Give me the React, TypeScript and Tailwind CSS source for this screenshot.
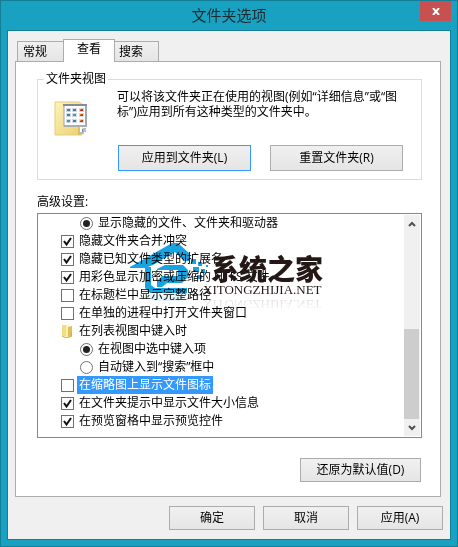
import React, { useState } from 'react';

type Item = {
  id: string;
  label: string;
  kind: 'check' | 'radio' | 'group';
  group?: string;
  on?: boolean;
};

const items: Item[] = [
  { id: 'show-hidden', label: '显示隐藏的文件、文件夹和驱动器', kind: 'radio', group: 'hidden-files', on: true },
  { id: 'merge', label: '隐藏文件夹合并冲突', kind: 'check', on: true },
  { id: 'ext', label: '隐藏已知文件类型的扩展名', kind: 'check', on: true },
  { id: 'ntfs', label: '用彩色显示加密或压缩的 NTFS 文件', kind: 'check', on: true },
  { id: 'path', label: '在标题栏中显示完整路径', kind: 'check' },
  { id: 'process', label: '在单独的进程中打开文件夹窗口', kind: 'check' },
  { id: 'typing', label: '在列表视图中键入时', kind: 'group' },
  { id: 'select', label: '在视图中选中键入项', kind: 'radio', group: 'typing', on: true },
  { id: 'search', label: '自动键入到“搜索”框中', kind: 'radio', group: 'typing' },
  { id: 'thumb', label: '在缩略图上显示文件图标', kind: 'check' },
  { id: 'size', label: '在文件夹提示中显示文件大小信息', kind: 'check', on: true },
  { id: 'preview', label: '在预览窗格中显示预览控件', kind: 'check', on: true },
];

const buttonStyle =
  'border bg-linear-to-b from-[#f0f0f0] to-[#e5e5e5] text-center text-[12px] leading-4 hover:border-[#3399ff]';

const FolderViewIcon = () => (
  <svg width="34" height="35" viewBox="0 0 34 35" aria-hidden="true">
    <defs>
      <linearGradient id="folder" x1="0" y1="0" x2="1" y2="1">
        <stop offset="0" stopColor="#fdf3b8" />
        <stop offset="1" stopColor="#ecd073" />
      </linearGradient>
    </defs>
    <path d="M1 1h24l3 2v31H1z" fill="url(#folder)" stroke="#e6cd7c" strokeWidth="1" />
    <path d="M24 26h3v8h-3z" fill="#dfbf5c" />
    <path d="M26 26h2v7h-2z" fill="#fff" />
    <path d="M29 27h3v4h-3zM25 31h5v2h-5z" fill="#b4bfce" />
    <path d="M28 28h1v3h-1z" fill="#5e8fd0" />
    <rect x="10" y="4" width="22" height="21" fill="#fff" stroke="#9a9fa8" strokeWidth="1" />
    <rect x="9" y="3" width="24" height="2" fill="#868b95" />
    <rect x="31" y="5" width="2" height="20" fill="#a4a8b0" />
    <rect x="10" y="24" width="23" height="2" fill="#a9adb4" />
    {[7, 12, 18].map((y, r) =>
      [12, 18, 25].map((x, c) => (
        <g key={`${x}-${y}`}>
          <rect x={x} y={y} width="5" height="4" fill="#d5dae2" />
          <rect
            x={x + 1}
            y={y + 1}
            width="3"
            height="2"
            fill={c === 2 ? ['#c5300f', '#b54a1c', '#d03718'][r] : ['#2e7fb5', '#4a72ad', '#3b9aba'][(r + c) % 3]}
          />
          <rect x={x + 1} y={y + 1} width="1" height="1" fill={c === 2 ? '#e99332' : '#47a668'} />
        </g>
      ))
    )}
  </svg>
);

const SmallFolder = () => (
  <svg width="13" height="14" viewBox="0 0 13 14" aria-hidden="true">
    <path d="M1 1h5v12l-5-1z" fill="#f3dc83" />
    <path d="M5 2l3-1v12l-3 1z" fill="#fff2b0" />
    <path d="M7 3l4-1v10l-4 1z" fill="#dfbf59" />
    <path d="M1 12l4 2 6-2" fill="none" stroke="#cfb055" />
    <path d="M10 8h1v4h-1z" fill="#85b7d8" />
  </svg>
);

const Watermark = () => (
  <div aria-hidden="true" className="pointer-events-none absolute top-7 left-[92px] mix-blend-multiply">
    <svg width="84" height="62" viewBox="0 0 84 62">
      <path d="M0 25L42 1h6l11 10v8h-5l-9-9-22 13-8 3H0z" fill="#18a4e0" />
      <path d="M15 25h6v18l4 3h32v5H20l-5-5z" fill="#18a4e0" />
      <path d="M27 27l8-4h18l5 5v7l-6 6H37l-5 4h-5v-6l5-5h16v-6H27z" fill="#18a4e0" />
      <path d="M61 17h5v5h-5zM68 20h4v4h-4zM63 25h6v5h-6zM71 27h4v4h-4zM67 33h5v4h-5zM76 23h2v2h-2z" fill="#18a4e0" />
      <path d="M17 53h39l-6 6H22z" fill="#e4f5fc" />
    </svg>
  </div>
);

const WatermarkText = () => (
  <div aria-hidden="true" className="pointer-events-none absolute top-10 left-[165px] text-[#231815]">
    <div className="pl-2 font-['Noto_Sans_CJK_SC',sans-serif] text-[28px] leading-[28px] font-black whitespace-nowrap">
      系统之家
    </div>
    <div className="font-['Liberation_Serif',serif] text-[13px] leading-4 whitespace-nowrap [-webkit-box-reflect:below_-2px_linear-gradient(transparent,rgba(0,0,0,0.2))]">
      XITONGZHIJIA.NET
    </div>
  </div>
);

const App: React.FC = () => {
  const [checked, setChecked] = useState<string[]>(items.filter((i) => i.on).map((i) => i.id));
  const [selected, setSelected] = useState('thumb');

  const handleToggle = (item: Item) => {
    setSelected(item.id);
    if (item.kind === 'radio') {
      const siblings = items.filter((i) => i.group === item.group).map((i) => i.id);
      setChecked([...checked.filter((id) => !siblings.includes(id)), item.id]);
    } else if (checked.includes(item.id)) {
      setChecked(checked.filter((id) => id !== item.id));
    } else {
      setChecked([...checked, item.id]);
    }
  };

  return (
    <div className="flex min-h-screen flex-col border border-[#127f97] bg-[#18a1c0] px-[6px] pb-[6px] font-['Open_Sans','Noto_Sans_CJK_SC',sans-serif] text-[12px] leading-4 text-black">
      <header className="grid h-[29px] grid-cols-[1fr_auto_1fr] items-start">
        <h1 className="col-start-2 pt-[4px] text-[15px] leading-5 text-[#1c2b30]">文件夹选项</h1>
        <button
          type="button"
          aria-label="关闭"
          className="flex h-5 w-[31px] items-center justify-center justify-self-end bg-[#c75050]"
        >
          <svg width="8" height="7" viewBox="0 0 8 7" aria-hidden="true">
            <path d="M1 0l6 7M7 0L1 7" stroke="#fff" strokeWidth="2" />
          </svg>
        </button>
      </header>

      <main className="flex grow flex-col border border-[#127f97] bg-[#f0f0f0] px-[7px] pt-2 pb-[9px]">
        <div role="tablist" className="flex items-end pl-[2px]">
          <button type="button" role="tab" aria-selected="false" className="h-5 w-[46px] border border-r-0 border-b-0 border-[#acacac] bg-linear-to-b from-[#f0f0f0] to-[#e5e5e5] pl-[5px] text-left">
            常规
          </button>
          <button type="button" role="tab" aria-selected="true" className="relative -mb-px h-[23px] w-[52px] border border-b-0 border-[#acacac] bg-white pb-1">
            查看
          </button>
          <button type="button" role="tab" aria-selected="false" className="h-5 w-[44px] border border-b-0 border-l-0 border-[#acacac] bg-linear-to-b from-[#f0f0f0] to-[#e5e5e5] pl-1 text-left">
            搜索
          </button>
        </div>

        <section role="tabpanel" className="mr-[2px] flex grow flex-col border border-[#acacac] bg-white pt-[9px] pr-[18px] pb-[14px] pl-[21px]">
          <fieldset className="border border-[#dcdcdc] pr-[18px] pb-2 pl-4">
            <legend className="-ml-[10px] px-[2px]">文件夹视图</legend>
            <div className="flex gap-[29px]">
              <div className="pt-[14px]">
                <FolderViewIcon />
              </div>
              <p className="pt-[2px] leading-[15px]">
                可以将该文件夹正在使用的视图(例如“详细信息”或“图<br />
                标”)应用到所有这种类型的文件夹中。
              </p>
            </div>
            <div className="mt-[9px] flex justify-between pl-16">
              <button type="button" className={`${buttonStyle} h-[26px] w-[133px] border-[#3399ff]`}>应用到文件夹(L)</button>
              <button type="button" className={`${buttonStyle} h-[26px] w-[133px] border-[#acacac]`}>重置文件夹(R)</button>
            </div>
          </fieldset>

          <h2 id="advanced" className="mt-[14px] mb-[3px]">高级设置:</h2>
          <div className="relative flex border border-[#828790]">
            <Watermark />
            <ul aria-labelledby="advanced" className="grow pb-[7px] pl-[23px]">
              {items.map((item) => (
                <li key={item.id} className={`flex h-[18px] items-center gap-[3px] ${item.kind === 'radio' ? 'pl-[19px]' : ''}`}>
                  {item.kind === 'group' && <SmallFolder />}
                  {item.kind === 'check' && (
                    <span className="grid size-[13px]">
                      <input
                        id={item.id}
                        type="checkbox"
                        checked={checked.includes(item.id)}
                        onChange={() => handleToggle(item)}
                        className="peer col-start-1 row-start-1 size-[13px] appearance-none border border-[#707070] bg-white"
                      />
                      <svg viewBox="0 0 13 13" aria-hidden="true" className="pointer-events-none relative col-start-1 row-start-1 hidden size-[13px] peer-checked:block">
                        <path d="M3 6l2.500 3.500L10 3" fill="none" stroke="#111" strokeWidth="2" />
                      </svg>
                    </span>
                  )}
                  {item.kind === 'radio' && (
                    <span className="grid size-[13px]">
                      <input
                        id={item.id}
                        type="radio"
                        name={item.group}
                        checked={checked.includes(item.id)}
                        onChange={() => handleToggle(item)}
                        className="peer col-start-1 row-start-1 size-[13px] appearance-none rounded-full border border-[#707070] bg-white"
                      />
                      <span className="pointer-events-none relative col-start-1 row-start-1 hidden size-[7px] place-self-center rounded-full bg-[#222] peer-checked:block" />
                    </span>
                  )}
                  {item.kind === 'group' ? (
                    <span className="px-[2px]">{item.label}</span>
                  ) : (
                    <label
                      htmlFor={item.id}
                      className={`px-[2px] leading-[18px] whitespace-nowrap ${selected === item.id ? 'bg-[#3399ff] text-white' : ''}`}
                    >
                      {item.label}
                    </label>
                  )}
                </li>
              ))}
            </ul>
            <WatermarkText />
            <div className="my-px mr-px flex w-4 flex-col bg-[#f0f0f0]">
              <button type="button" aria-label="向上滚动" className="flex h-[17px] items-center justify-center">
                <svg width="8" height="6" viewBox="0 0 8 6" aria-hidden="true">
                  <path d="M1 5l3-3 3 3" fill="none" stroke="#505050" strokeWidth="2" />
                </svg>
              </button>
              <div className="grow" />
              <div className="mr-px h-[90px] bg-[#cdcdcd]" />
              <button type="button" aria-label="向下滚动" className="flex h-[17px] items-center justify-center">
                <svg width="8" height="6" viewBox="0 0 8 6" aria-hidden="true">
                  <path d="M1 1l3 3 3-3" fill="none" stroke="#505050" strokeWidth="2" />
                </svg>
              </button>
            </div>
          </div>

          <button type="button" className={`${buttonStyle} mt-auto mr-px h-6 w-[121px] self-end border-[#acacac]`}>还原为默认值(D)</button>
        </section>

        <footer className="mt-[9px] flex justify-end gap-2">
          <button type="button" className={`${buttonStyle} h-6 w-[86px] border-[#acacac]`}>确定</button>
          <button type="button" className={`${buttonStyle} h-6 w-[86px] border-[#acacac]`}>取消</button>
          <button type="button" className={`${buttonStyle} h-6 w-[86px] border-[#acacac]`}>应用(A)</button>
        </footer>
      </main>
    </div>
  );
};

export default App;
